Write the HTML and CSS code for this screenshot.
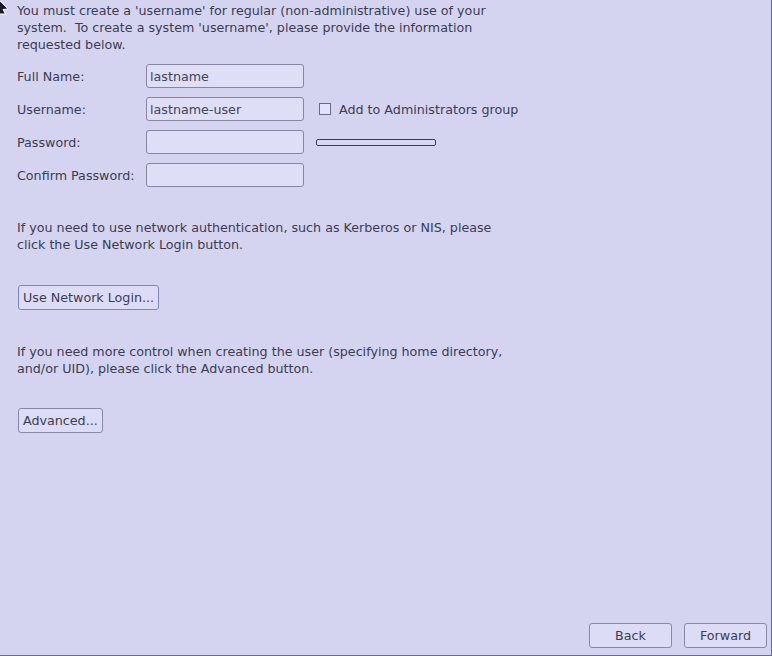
FILE: index.html
```html
<!DOCTYPE html>
<html>
<head>
<meta charset="utf-8">
<link rel="stylesheet" href="styles.css">
</head>
<body>
<div class="screen">
  <svg class="cursor" width="12" height="16" viewBox="0 0 12 16"><polygon points="-3,-2 8,9 3,9.5 5.5,14 -3,14" fill="#1a1a2a" stroke="#ffffff" stroke-width="1"/></svg>
  <p class="intro">You must create a 'username' for regular (non-administrative) use of your<br>system.&nbsp; To create a system 'username', please provide the information<br>requested below.</p>
  <div class="form">
    <label class="lbl">Full Name:</label>
    <div class="field">lastname</div>
    <div></div>
    <label class="lbl">Username:</label>
    <div class="field">lastname-user</div>
    <div class="check"><span class="box"></span><span>Add to Administrators group</span></div>
    <label class="lbl">Password:</label>
    <div class="field"></div>
    <div class="meter-wrap"><div class="meter"></div></div>
    <label class="lbl">Confirm Password:</label>
    <div class="field"></div>
    <div></div>
  </div>
  <p class="para p1">If you need to use network authentication, such as Kerberos or NIS, please<br>click the Use Network Login button.</p>
  <div class="row r1"><button class="btn focus">Use Network Login...</button></div>
  <p class="para p2">If you need more control when creating the user (specifying home directory,<br>and/or UID), please click the Advanced button.</p>
  <div class="row r2"><button class="btn adv">Advanced...</button></div>
  <div class="footer">
    <button class="btn nav">Back</button>
    <button class="btn nav">Forward</button>
  </div>
</div>
</body>
</html>
```
FILE: styles.css
```css
html, body {
  margin: 0;
  padding: 0;
  background: #d4d4f0;
}
.screen {
  position: relative;
  width: 754px;
  height: 655px;
  border-right: 1px solid #6c6c8c;
  border-bottom: 1px solid #6c6c8c;
  background: #d4d4f0;
  font-family: "DejaVu Sans", sans-serif;
  font-size: 12.7px;
  color: #3c3c52;
  display: flex;
  flex-direction: column;
  padding-left: 17px;
  overflow: hidden;
}
.cursor {
  position: absolute;
  left: 0;
  top: 0;
}
p { margin: 0; line-height: 17px; }
.intro { margin-top: 2px; }
.form {
  margin-top: 11px;
  display: grid;
  grid-template-columns: 129px 158px auto;
  grid-auto-rows: 24px;
  row-gap: 9px;
  align-items: center;
}
.lbl { line-height: 24px; padding-top: 1px; }
.field {
  height: 24px;
  box-sizing: border-box;
  border: 1px solid #8686a4;
  border-radius: 3px;
  background: #dedef6;
  padding: 1px 3px 0;
  line-height: 22px;
  color: #44445a;
}
.check {
  display: flex;
  align-items: center;
  padding-left: 15px;
}
.box {
  width: 10px;
  height: 10px;
  border: 1px solid #6a6a88;
  background: #e2e2f8;
  margin-right: 8px;
}
.meter-wrap { padding-left: 12px; display: flex; align-items: center; }
.meter {
  width: 118px;
  height: 5px;
  border: 1px solid #3a3a58;
  border-radius: 2px;
  background: #d8d8f2;
}
.p1 { margin-top: 32px; }
.p2 { margin-top: 33px; }
.row { display: flex; padding-left: 1px; }
.r1 { margin-top: 32px; }
.r2 { margin-top: 31px; }
.btn {
  font-family: "DejaVu Sans", sans-serif;
  font-size: 12.7px;
  color: #3c3c52;
  height: 25px;
  border: 1px solid #8888a8;
  border-radius: 3px;
  background: #dcdcf6;
  padding: 0 4px;
  line-height: 23px;
  margin: 0;
  white-space: nowrap;
  text-align: left;
}
.btn.focus { border-color: #7588c8; width: 141px; }
.adv { width: 85px; }
.footer {
  margin-top: auto;
  display: flex;
  justify-content: flex-end;
  gap: 12px;
  padding-right: 4px;
  padding-bottom: 7px;
}
.nav { width: 83px; text-align: center; }
```
